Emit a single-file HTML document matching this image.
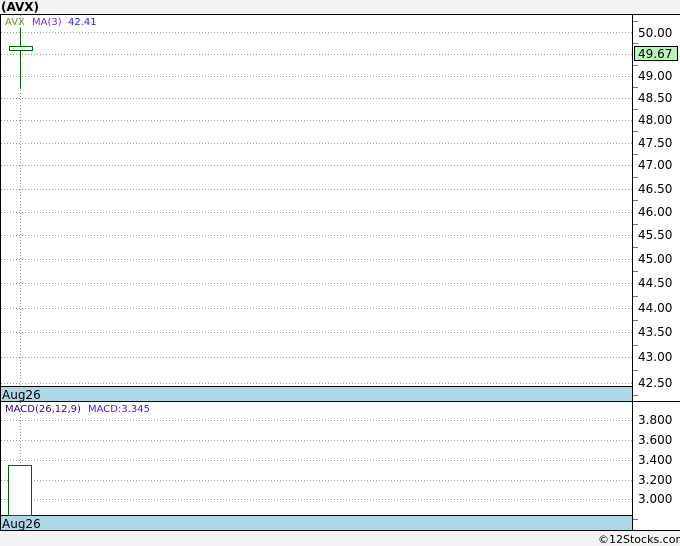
<!DOCTYPE html>
<html><head><style>
body{margin:0;background:#f3f3f3;width:680px;height:546px;overflow:hidden;font-family:"Liberation Sans","DejaVu Sans",sans-serif}
svg{display:block}
</style></head><body>
<svg width="680" height="546" xmlns="http://www.w3.org/2000/svg" font-family="'DejaVu Sans','Liberation Sans',sans-serif">
<rect x="0" y="0" width="680" height="546" fill="#f3f3f3"/>
<text x="1" y="11" font-size="12" font-weight="bold" fill="#000" font-family="'DejaVu Sans',sans-serif">(AVX)</text>
<rect x="0.5" y="14.5" width="680" height="516" fill="#fff" stroke="#000"/>
<g stroke="#999" stroke-dasharray="1,2" stroke-width="1">
<line x1="1" x2="632" y1="32.5" y2="32.5"/><line x1="1" x2="632" y1="54.5" y2="54.5"/>
<line x1="1" x2="632" y1="76.5" y2="76.5"/><line x1="1" x2="632" y1="98.5" y2="98.5"/>
<line x1="1" x2="632" y1="120.5" y2="120.5"/><line x1="1" x2="632" y1="143.5" y2="143.5"/>
<line x1="1" x2="632" y1="165.5" y2="165.5"/><line x1="1" x2="632" y1="189.5" y2="189.5"/>
<line x1="1" x2="632" y1="212.5" y2="212.5"/><line x1="1" x2="632" y1="235.5" y2="235.5"/>
<line x1="1" x2="632" y1="259.5" y2="259.5"/><line x1="1" x2="632" y1="283.5" y2="283.5"/>
<line x1="1" x2="632" y1="308.5" y2="308.5"/><line x1="1" x2="632" y1="332.5" y2="332.5"/>
<line x1="1" x2="632" y1="357.5" y2="357.5"/><line x1="1" x2="632" y1="383.5" y2="383.5"/>
<line x1="1" x2="632" y1="420.5" y2="420.5"/><line x1="1" x2="632" y1="440.5" y2="440.5"/>
<line x1="1" x2="632" y1="460.5" y2="460.5"/><line x1="1" x2="632" y1="480.5" y2="480.5"/>
<line x1="1" x2="632" y1="499.5" y2="499.5"/>
<line x1="20.5" x2="20.5" y1="15" y2="531"/>
</g>
<line x1="632.5" x2="632.5" y1="14" y2="531" stroke="#000"/>
<rect x="1" y="387" width="631" height="14" fill="#add8e6"/>
<line x1="0" x2="632" y1="386.5" y2="386.5" stroke="#000"/>
<line x1="0" x2="680" y1="401.5" y2="401.5" stroke="#000"/>
<rect x="1" y="516" width="631" height="14" fill="#add8e6"/>
<line x1="0" x2="632" y1="515.5" y2="515.5" stroke="#000"/>
<g stroke="#777">
<line x1="633" x2="638" y1="21.5" y2="21.5"/><line x1="633" x2="638" y1="43.5" y2="43.5"/><line x1="633" x2="638" y1="65.5" y2="65.5"/><line x1="633" x2="638" y1="87.5" y2="87.5"/><line x1="633" x2="638" y1="109.5" y2="109.5"/><line x1="633" x2="638" y1="131.5" y2="131.5"/><line x1="633" x2="638" y1="154.5" y2="154.5"/><line x1="633" x2="638" y1="177.5" y2="177.5"/><line x1="633" x2="638" y1="200.5" y2="200.5"/><line x1="633" x2="638" y1="224.5" y2="224.5"/><line x1="633" x2="638" y1="247.5" y2="247.5"/><line x1="633" x2="638" y1="271.5" y2="271.5"/><line x1="633" x2="638" y1="296.5" y2="296.5"/><line x1="633" x2="638" y1="320.5" y2="320.5"/><line x1="633" x2="638" y1="345.5" y2="345.5"/><line x1="633" x2="638" y1="370.5" y2="370.5"/><line x1="633" x2="638" y1="395.5" y2="395.5"/><line x1="633" x2="638" y1="519.5" y2="519.5"/>
</g>
<g font-size="12" fill="#000">
<text x="638" y="37">50.00</text><text x="638" y="80">49.00</text><text x="638" y="102">48.50</text><text x="638" y="124">48.00</text><text x="638" y="147">47.50</text><text x="638" y="169">47.00</text><text x="638" y="193">46.50</text><text x="638" y="216">46.00</text><text x="638" y="239">45.50</text><text x="638" y="263">45.00</text><text x="638" y="287">44.50</text><text x="638" y="312">44.00</text><text x="638" y="336">43.50</text><text x="638" y="361">43.00</text><text x="638" y="387">42.50</text>
<text x="638" y="424">3.800</text><text x="638" y="444">3.600</text><text x="638" y="464">3.400</text><text x="638" y="484">3.200</text><text x="638" y="503">3.000</text>
</g>
<rect x="634.5" y="46.5" width="43" height="14" fill="#b8f5b8" stroke="#000"/>
<text x="638" y="58" font-size="12" fill="#000">49.67</text>
<line x1="20.5" x2="20.5" y1="28" y2="89" stroke="#006400"/>
<rect x="9.5" y="46.5" width="23" height="4" fill="#fff" stroke="#006400"/>
<rect x="8.5" y="465.5" width="23" height="50" fill="#fff" stroke="#006400"/>
<g font-size="10">
<text x="5" y="25" fill="#6b8e23">AVX</text><text x="32" y="25" fill="#7b2be2">MA(3)</text><text x="68" y="25" fill="#1e2be2">42.41</text>
<text x="5" y="412" fill="#400080">MACD(26,12,9)</text><text x="88" y="412" fill="#5a10ee">MACD:3.345</text>
</g>
<text x="2" y="399" font-size="12" fill="#000">Aug26</text>
<text x="2" y="528" font-size="12" fill="#000">Aug26</text>
<text x="598" y="543" font-size="11" fill="#000">©12Stocks.com</text>
</svg>
</body></html>
